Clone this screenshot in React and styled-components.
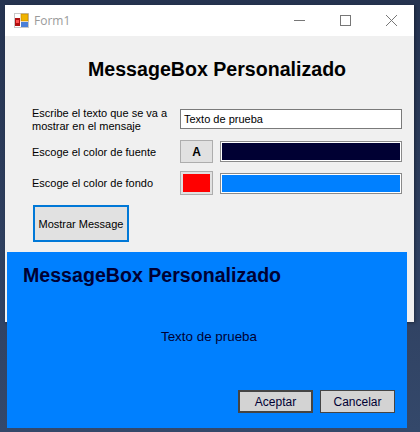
import styled, { createGlobalStyle } from 'styled-components';

const Global = createGlobalStyle`
  html, body { margin: 0; padding: 0; }
  body { width: 420px; height: 432px; overflow: hidden; }
`

const Desktop = styled.div`
  position: relative;
  width: 420px;
  height: 432px;
  background: linear-gradient(180deg, #253350 0%, #2e3f5f 55%, #34486a 100%);
  font-family: "Liberation Sans", Arial, sans-serif;
`

const Win = styled.div`
  position: absolute;
  left: 5px;
  top: 5px;
  width: 409px;
  height: 317px;
  background: #f0f0f0;
  box-shadow: 1px 1px 3px rgba(0,0,0,0.35);
  display: flex;
  flex-direction: column;
`

const TitleBar = styled.div`
  height: 31px;
  background: #fff;
  display: flex;
  align-items: center;
  padding-left: 9px;
`

const AppName = styled.span`
  font-family: "Open Sans", "Noto Sans", sans-serif;
  font-size: 12px;
  color: #9a9a9a;
  margin-left: 5px;
  flex: 1;
`

const Ctrl = styled.div`
  width: 46px;
  height: 31px;
  display: flex;
  align-items: center;
  justify-content: center;
`

const Body = styled.div`
  flex: 1;
  padding: 20px 0 0 27px;
`

const Heading = styled.h1`
  margin: 0 0 24px 56px;
  font-size: 19.6px;
  font-weight: bold;
  color: #000;
  line-height: 26px;
`

const Form = styled.div`
  display: grid;
  grid-template-columns: 148px 222px;
  row-gap: 8px;
  align-items: center;
`

const Label = styled.div`
  font-size: 11px;
  line-height: 12.5px;
  color: #000;
  padding-top: 1px;
`

const TextBox = styled.div`
  height: 20px;
  box-sizing: border-box;
  border: 1px solid #7a7a7a;
  background: #fff;
  font-size: 11px;
  line-height: 18px;
  padding-left: 3px;
`

const Pick = styled.div`
  display: flex;
  gap: 7px;
  align-items: center;
`

const SwatchBtn = styled.div`
  width: 33px;
  height: ${p => p.$h}px;
  box-sizing: border-box;
  border: 1px solid #adadad;
  background: #e1e1e1;
  display: flex;
  align-items: center;
  justify-content: center;
  padding: 2px;
  font-weight: bold;
  font-size: 12px;
`

const Red = styled.div`
  width: 100%;
  height: 100%;
  background: #ff0000;
`

const Bar = styled.div`
  flex: 1;
  height: 21px;
  box-sizing: border-box;
  border: 1px solid #8a8a8a;
  padding: 1px;
  background: #fff;
  &::after {
    content: '';
    display: block;
    height: 100%;
    background: ${p => p.$c};
  }
`

const ShowBtn = styled.div`
  margin: 10px 0 0 1px;
  width: 96px;
  height: 37px;
  box-sizing: border-box;
  border: 2px solid #0078d7;
  background: #e1e1e1;
  display: flex;
  align-items: center;
  justify-content: center;
  font-size: 11px;
`

const MsgBox = styled.div`
  position: absolute;
  left: 7px;
  top: 252px;
  width: 400px;
  height: 176px;
  background: #0080ff;
  display: flex;
  flex-direction: column;
  padding: 12px 12px 15px 16px;
  box-sizing: border-box;
`

const MsgTitle = styled.div`
  font-size: 19.6px;
  font-weight: bold;
  color: #000033;
  line-height: 22px;
`

const MsgText = styled.div`
  flex: 1;
  display: flex;
  align-items: center;
  justify-content: center;
  font-size: 13.4px;
  color: #000033;
  padding-bottom: 4px;
`

const Btns = styled.div`
  display: flex;
  justify-content: flex-end;
  gap: 7px;
`

const MsgBtn = styled.div`
  width: 75px;
  height: 23px;
  box-sizing: border-box;
  border: ${p => (p.$def ? '2px solid #444' : '1px solid #444')};
  background: #d3d3d3;
  display: flex;
  align-items: center;
  justify-content: center;
  font-size: 12px;
  color: #000033;
`

function AppIcon() {
  return (
    <svg width="15" height="15" viewBox="0 0 15 15">
      <rect x="0.5" y="0.5" width="14" height="14" fill="#fff" stroke="#c8c8c8" />
      <rect x="1" y="5" width="5" height="8" fill="#b01010" />
      <rect x="2" y="7" width="3" height="3" fill="#ff5050" />
      <rect x="7" y="1" width="7" height="7" fill="#f0b400" stroke="#c08000" strokeWidth="0.6" />
      <rect x="7" y="9" width="7" height="5" fill="#4a7fd8" />
    </svg>
  )
}

export default function App() {
  return (
    <Desktop>
      <Global />
      <Win>
        <TitleBar>
          <AppIcon />
          <AppName>Form1</AppName>
          <Ctrl>
            <svg width="11" height="11"><line x1="0" y1="5.5" x2="11" y2="5.5" stroke="#777" /></svg>
          </Ctrl>
          <Ctrl>
            <svg width="11" height="11"><rect x="0.5" y="0.5" width="10" height="10" fill="none" stroke="#777" /></svg>
          </Ctrl>
          <Ctrl>
            <svg width="11" height="11"><path d="M0 0L11 11M11 0L0 11" stroke="#777" /></svg>
          </Ctrl>
        </TitleBar>
        <Body>
          <Heading>MessageBox Personalizado</Heading>
          <Form>
            <Label>Escribe el texto que se va a<br />mostrar en el mensaje</Label>
            <TextBox>Texto de prueba</TextBox>
            <Label>Escoge el color de fuente</Label>
            <Pick>
              <SwatchBtn $h={23}>A</SwatchBtn>
              <Bar $c="#000033" />
            </Pick>
            <Label>Escoge el color de fondo</Label>
            <Pick>
              <SwatchBtn $h={24}><Red /></SwatchBtn>
              <Bar $c="#0080ff" />
            </Pick>
          </Form>
          <ShowBtn>Mostrar Message</ShowBtn>
        </Body>
      </Win>
      <MsgBox>
        <MsgTitle>MessageBox Personalizado</MsgTitle>
        <MsgText>Texto de prueba</MsgText>
        <Btns>
          <MsgBtn $def>Aceptar</MsgBtn>
          <MsgBtn>Cancelar</MsgBtn>
        </Btns>
      </MsgBox>
    </Desktop>
  )
}
